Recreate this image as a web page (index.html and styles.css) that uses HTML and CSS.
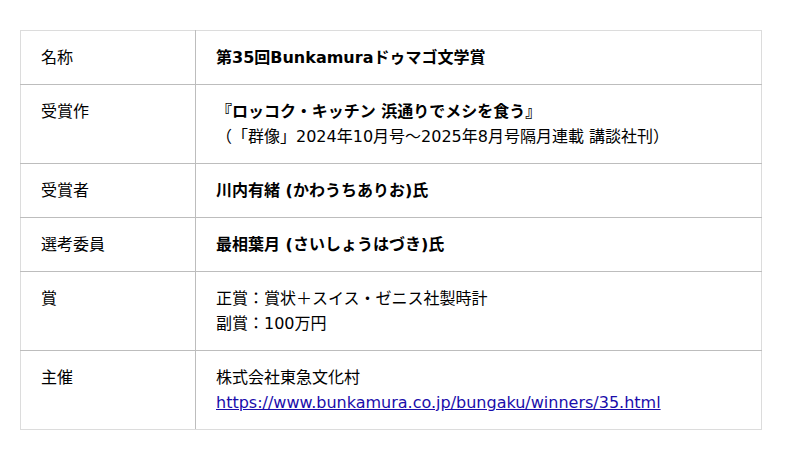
FILE: index.html
```html
<!DOCTYPE html>
<html lang="ja">
<head>
<meta charset="utf-8">
<link rel="stylesheet" href="styles.css">
</head>
<body>
<table class="info">
  <tr>
    <th>名称</th>
    <td class="b">第35回Bunkamuraドゥマゴ文学賞</td>
  </tr>
  <tr>
    <th>受賞作</th>
    <td><span class="b">『ロッコク・キッチン 浜通りでメシを食う』</span><br>（「群像」2024年10月号～2025年8月号隔月連載 講談社刊）</td>
  </tr>
  <tr>
    <th>受賞者</th>
    <td class="b">川内有緒 (かわうちありお)氏</td>
  </tr>
  <tr>
    <th>選考委員</th>
    <td class="b">最相葉月 (さいしょうはづき)氏</td>
  </tr>
  <tr>
    <th>賞</th>
    <td>正賞：賞状＋スイス・ゼニス社製時計<br>副賞：100万円</td>
  </tr>
  <tr>
    <th>主催</th>
    <td>株式会社東急文化村<br><a href="#">https://www.bunkamura.co.jp/bungaku/winners/35.html</a></td>
  </tr>
</table>
</body>
</html>
```

FILE: styles.css
```css
html, body {
  margin: 0;
  padding: 0;
  background: #fff;
}
body {
  padding: 30px 0 0 20px;
  font-family: "DejaVu Sans", "Noto Sans CJK JP", sans-serif;
  font-size: 16px;
  line-height: 25px;
  color: #000;
  text-spacing-trim: space-all;
}
.info {
  width: 742px;
  border-collapse: collapse;
  border: 1px solid #dcdcdc;
}
.info th,
.info td {
  padding: 14px 20px;
  vertical-align: top;
  text-align: left;
  border-bottom: 1px solid #bdbdbd;
}
.info tr:last-child th,
.info tr:last-child td {
  border-bottom: 1px solid #dcdcdc;
}
.info th {
  width: 134px;
  font-weight: normal;
  border-right: 1px solid #bdbdbd;
}
.b {
  font-weight: bold;
}
.info a {
  color: #1a0dab;
  text-decoration: underline;
}
```
